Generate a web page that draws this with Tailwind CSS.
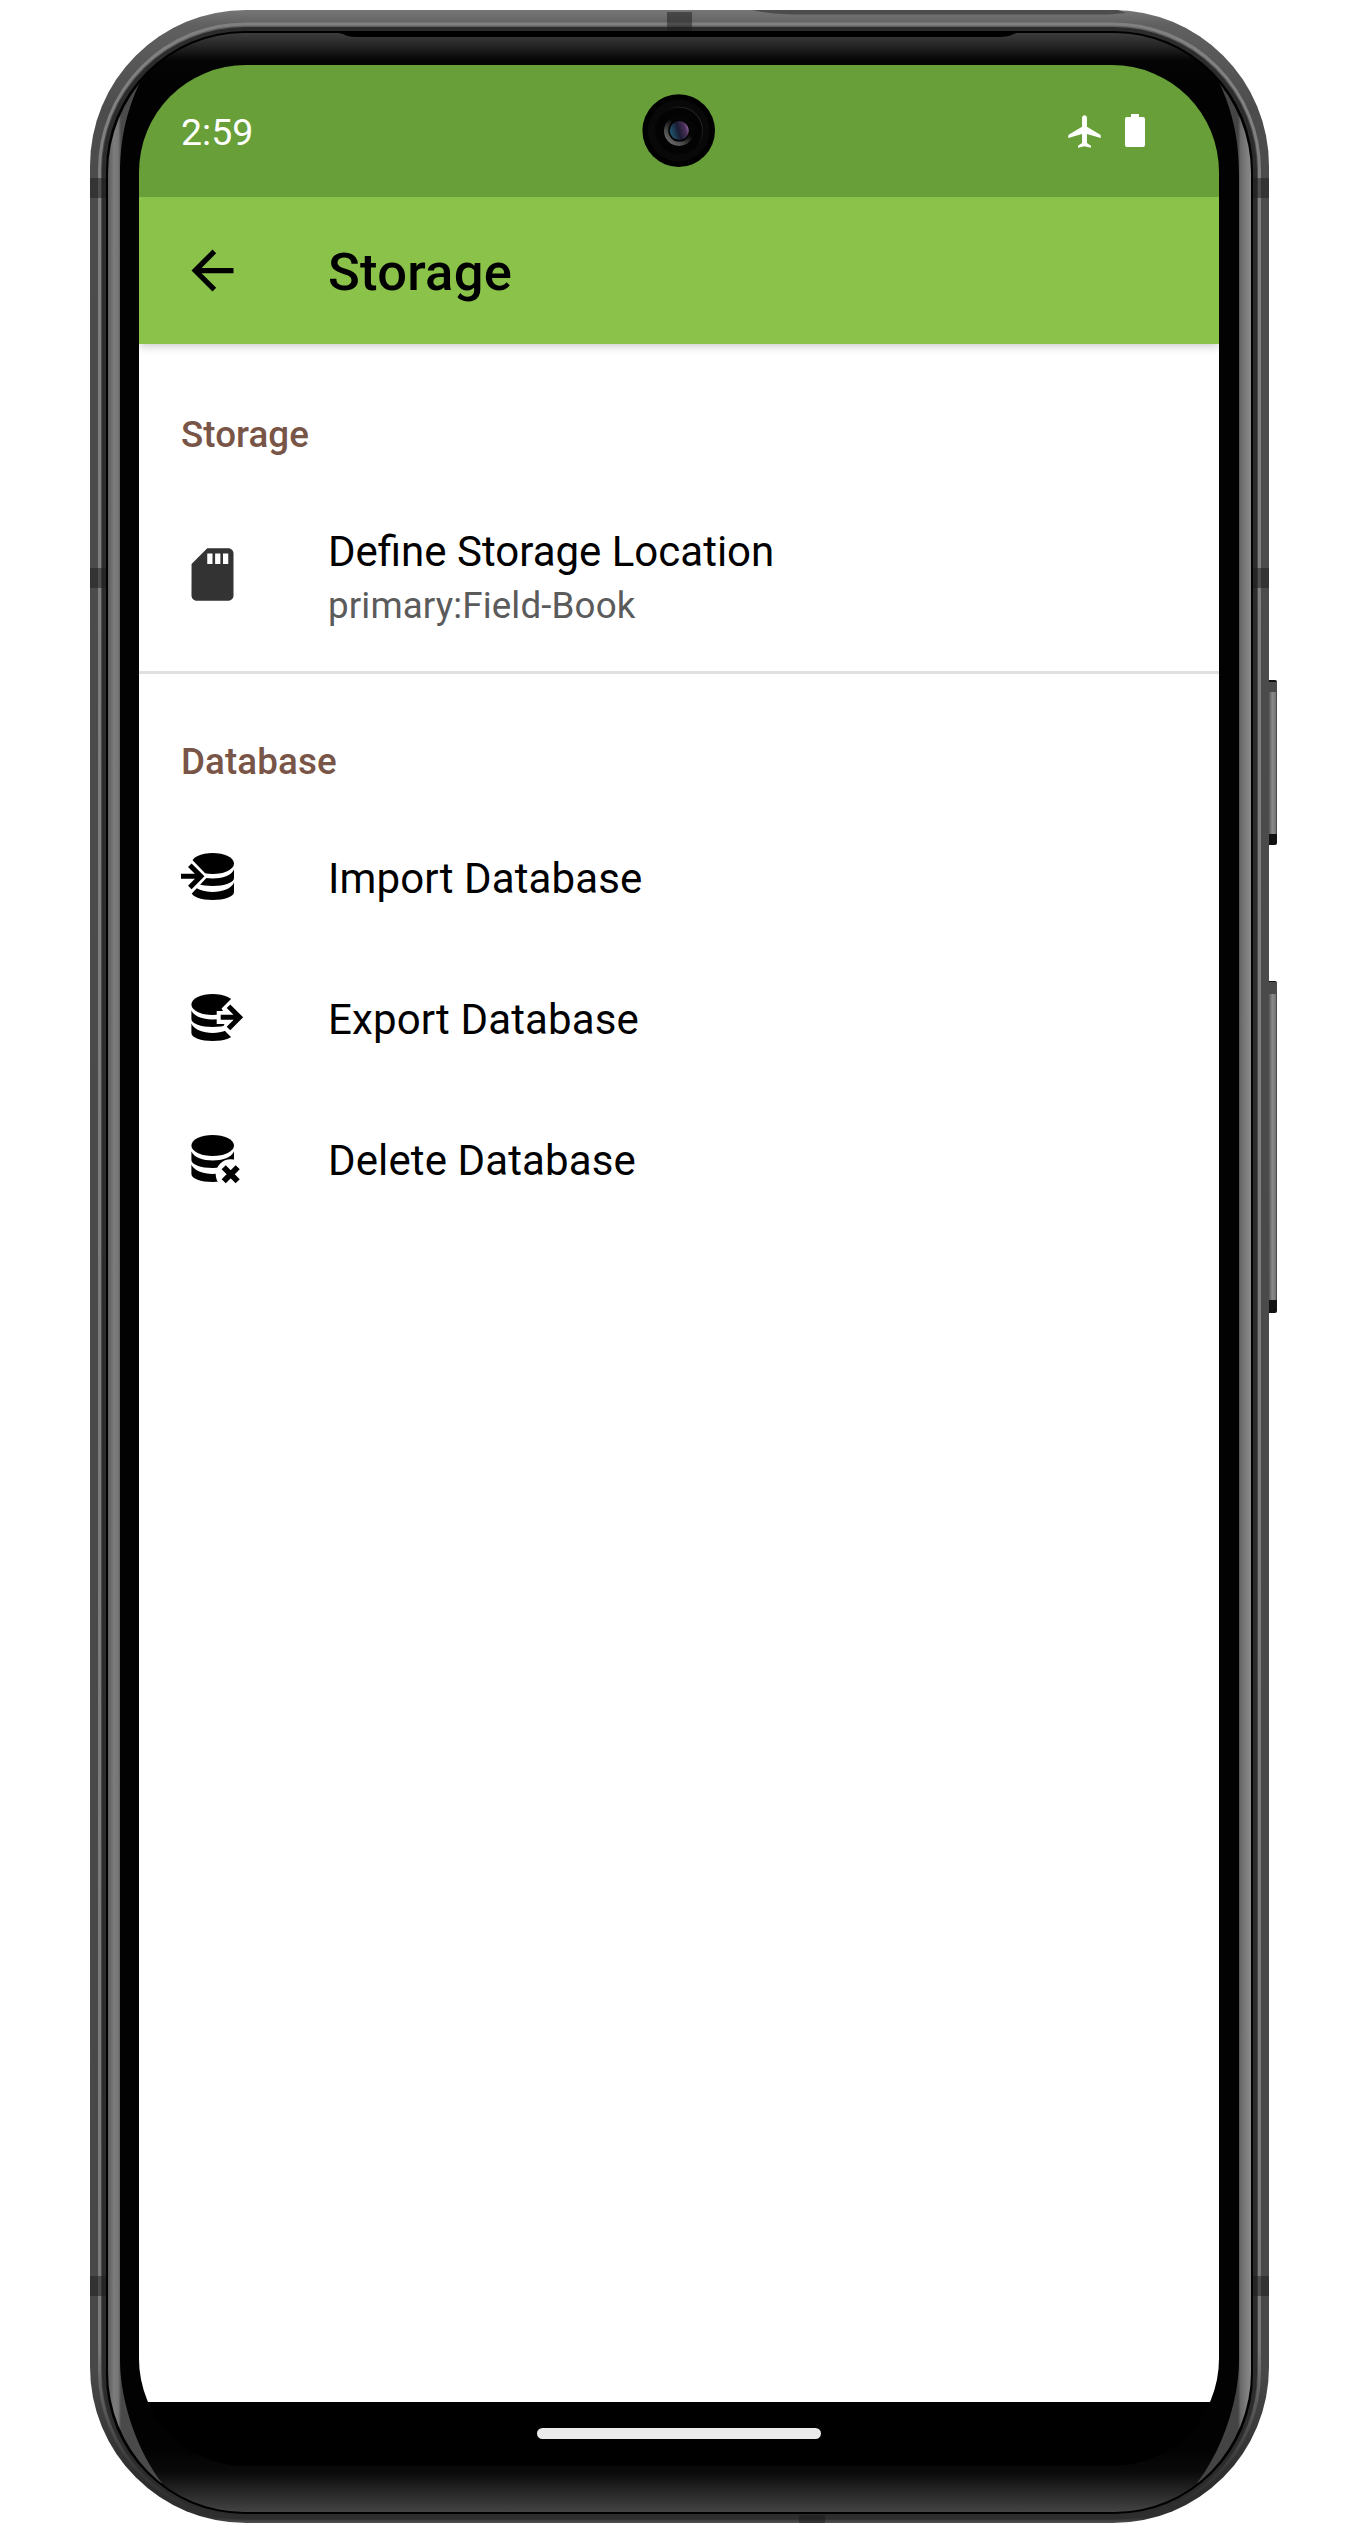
<!DOCTYPE html>
<html lang="en">
<head>
<meta charset="utf-8">
<title>Storage</title>
<script src="https://cdn.jsdelivr.net/npm/@tailwindcss/browser@4"></script>
</head>
<body class="relative h-[2533px] w-[1367px] overflow-hidden bg-white font-['Roboto',sans-serif] text-black">

<!-- Device body -->
<svg class="absolute inset-0" width="1367" height="2533" viewBox="0 0 1367 2533" fill="none">
  <defs>
    <linearGradient id="body" gradientUnits="userSpaceOnUse" x1="0" y1="10" x2="0" y2="2523">
      <stop offset="0" stop-color="#767676"/><stop offset=".006" stop-color="#606060"/><stop offset=".04" stop-color="#4c4c4c"/><stop offset=".94" stop-color="#484848"/><stop offset=".985" stop-color="#2c2c2c"/><stop offset=".998" stop-color="#303030"/><stop offset="1" stop-color="#505050"/>
    </linearGradient>
    <linearGradient id="line" gradientUnits="userSpaceOnUse" x1="0" y1="10" x2="0" y2="2523">
      <stop offset="0" stop-color="#808080"/><stop offset=".93" stop-color="#7a7a7a"/><stop offset=".98" stop-color="#353535"/><stop offset="1" stop-color="#2c2c2c"/>
    </linearGradient>
    <linearGradient id="glass" gradientUnits="userSpaceOnUse" x1="0" y1="33" x2="0" y2="2512">
      <stop offset="0" stop-color="#3c3c3c"/><stop offset=".005" stop-color="#262626"/><stop offset=".011" stop-color="#050505"/><stop offset=".02" stop-color="#020202"/><stop offset=".975" stop-color="#020202"/><stop offset=".984" stop-color="#0a0a0a"/><stop offset=".994" stop-color="#2e2e2e"/><stop offset="1" stop-color="#444"/>
    </linearGradient>
    <linearGradient id="bandL" gradientUnits="userSpaceOnUse" x1="108" y1="0" x2="121" y2="0">
      <stop offset="0" stop-color="#5a5a5a"/><stop offset=".45" stop-color="#7c7c7c"/><stop offset=".8" stop-color="#767676"/><stop offset="1" stop-color="#4a4a4a"/>
    </linearGradient>
    <linearGradient id="bandR" gradientUnits="userSpaceOnUse" x1="1251" y1="0" x2="1238" y2="0">
      <stop offset="0" stop-color="#8a8a8a"/><stop offset=".4" stop-color="#7c7c7c"/><stop offset=".8" stop-color="#6a6a6a"/><stop offset="1" stop-color="#444"/>
    </linearGradient>
    <linearGradient id="key" x1="0" y1="0" x2="1" y2="0">
      <stop offset="0" stop-color="#555"/><stop offset=".4" stop-color="#8a8a8a"/><stop offset=".8" stop-color="#7a7a7a"/><stop offset="1" stop-color="#333"/>
    </linearGradient>
    <clipPath id="glassClip"><rect x="108" y="33" width="1143" height="2479" rx="136" ry="140"/></clipPath>
  </defs>

  <!-- Side keys -->
  <rect x="1266" y="680" width="11" height="165" rx="2" fill="#111"/>
  <rect x="1268" y="682" width="9" height="12" fill="#4a4a4a"/>
  <rect x="1269" y="692" width="8" height="142" fill="url(#key)"/>
  <rect x="1266" y="981" width="11" height="332" rx="2" fill="#111"/>
  <rect x="1268" y="982" width="9" height="14" fill="#4a4a4a"/>
  <rect x="1269" y="994" width="8" height="306" fill="url(#key)"/>

  <!-- Metal rail -->
  <rect x="90" y="10" width="1179" height="2513" rx="156" fill="url(#body)"/>
  <path d="M752 10H1118L1126 13L1108 14.500H800C778 14.500 768 13 752 10Z" fill="#4c4c4c"/>
  <rect x="99.500" y="24" width="1160" height="2494" rx="146" stroke="url(#line)" stroke-width="3"/>
  <rect x="102" y="27" width="1155" height="2489" rx="143" fill="#2c2c2c"/>
  <path d="M667 12H692V31H667ZM90 178H106V198H90ZM1253 178H1269V198H1253ZM90 568H106V588H90ZM1253 568H1269V588H1253ZM90 2276H106V2296H90ZM1253 2276H1269V2296H1253ZM799 2515H825V2523H799Z" fill="#1c1c1c" fill-opacity=".5"/>
  <rect x="106" y="31" width="1147" height="2483" rx="139" fill="#000"/>

  <!-- Glass edge -->
  <rect x="108" y="33" width="1143" height="2479" rx="136" ry="140" fill="url(#glass)"/>
  <path d="M338 32H1023C1012 33 1012 37 1000 37H356C346 37 346 34 338 33Z" fill="#000"/>
  <g clip-path="url(#glassClip)">
    <path d="M148 66C130 100 120 130 120 175V2360C120 2405 140 2455 162 2483L100 2500V60Z" fill="url(#bandL)"/>
    <path d="M1211 66C1229 100 1239 130 1239 175V2360C1239 2405 1219 2455 1197 2483L1260 2500V60Z" fill="url(#bandR)"/>
  </g>
</svg>

<!-- Screen -->
<div class="relative ml-[139px] mt-[65px] flex h-[2401px] w-[1080px] flex-col overflow-hidden rounded-[107px] bg-black">
  <header class="relative z-20 flex h-[132px] shrink-0 items-center justify-between bg-[#689f38] pl-[42px] pr-[74px] text-white">
    <span class="pt-[3px] text-[37.5px] leading-[43px]">2:59</span>
    <div class="flex items-center gap-[21px]">
      <svg width="39" height="39" viewBox="0 0 24 24" fill="currentColor"><path d="M22 16v-1.300c0-.4-.2-.7-.5-.9l-8-4.800V3.500c0-.83-.67-1.500-1.500-1.500s-1.500.67-1.500 1.500V9l-8 4.800c-.3.200-.5.500-.5.900V16l8.500-2.500V19L8 20.700V22l4-1 4 1v-1.300L13.500 19v-5.500L22 16z"/></svg>
      <svg class="-mt-px" width="20" height="33" viewBox="0 0 20 33" fill="currentColor"><path d="M6 0h8v3h4a2 2 0 0 1 2 2v26a2 2 0 0 1-2 2H2a2 2 0 0 1-2-2V5a2 2 0 0 1 2-2h4z"/></svg>
    </div>
    <svg class="absolute left-[503px] top-[29px]" width="74" height="74" viewBox="0 0 74 74">
      <defs>
        <linearGradient id="lens" x1="0" y1=".6" x2="1" y2=".3"><stop offset="0" stop-color="#1f5a70"/><stop offset=".45" stop-color="#1a1c33"/><stop offset=".8" stop-color="#4a3058"/><stop offset="1" stop-color="#a070b0"/></linearGradient>
        <linearGradient id="ring" x1="0" y1="1" x2=".8" y2="0"><stop offset="0" stop-color="#808080"/><stop offset=".35" stop-color="#4a4a4a"/><stop offset=".65" stop-color="#050505"/></linearGradient>
        <linearGradient id="rim" x1="0" y1="1" x2="1" y2="0"><stop offset=".5" stop-color="#040404"/><stop offset="1" stop-color="#3a3a3a"/></linearGradient>
      </defs>
      <circle cx="36.700" cy="36.600" r="36.300" fill="#000"/>
      <circle cx="36.700" cy="36.600" r="31" fill="#080808"/>
      <circle cx="37" cy="36.600" r="23.500" fill="#030303" stroke="url(#rim)" stroke-width="1"/>
      <circle cx="37" cy="37" r="15" fill="url(#ring)"/>
      <circle cx="37.300" cy="36.600" r="11" fill="#020202"/>
      <circle cx="37.300" cy="36.600" r="9.500" fill="url(#lens)"/>
    </svg>
  </header>

  <div class="relative z-10 flex h-[147px] shrink-0 items-center bg-[#8bc34a] pl-[42px] shadow-[0_2px_9px_rgba(0,0,0,0.22)]">
    <svg width="63" height="63" viewBox="0 0 24 24"><path d="M20 11H7.830l5.590-5.590L12 4l-8 8 8 8 1.410-1.410L7.830 13H20v-2z"/></svg>
    <h1 class="ml-[84px] pt-[3px] text-[52.5px] font-medium leading-[62px] tracking-[0.25px]">Storage</h1>
  </div>

  <main class="h-[2058px] shrink-0 bg-white">
    <section class="h-[330px] border-b-[3px] border-[#e0e0e0] px-[42px] pt-[69px]">
      <h2 class="text-[36.75px] font-medium leading-[43px] tracking-[0.05px] text-[#795548]">Storage</h2>
      <div class="mt-[71px] flex gap-[84px]">
        <svg class="mt-4 shrink-0" width="63" height="63" viewBox="0 0 24 24" fill="#333"><path d="M18 2h-8L4.020 8 4 20c0 1.100.9 2 2 2h12c1.100 0 2-.9 2-2V4c0-1.100-.9-2-2-2zm-6 6h-2V4h2v4zm3 0h-2V4h2v4zm3 0h-2V4h2v4z"/></svg>
        <div>
          <p class="text-[42px] leading-[49px]">Define Storage Location</p>
          <p class="mt-2 text-[36.75px] leading-[43px] tracking-[0.12px] text-[#5b5b5b]">primary:Field-Book</p>
        </div>
      </div>
    </section>

    <section class="px-[42px] pt-[66px]">
      <h2 class="text-[36.75px] font-medium leading-[43px] tracking-[0.1px] text-[#795548]">Database</h2>
      <ul class="mt-[25px] text-[42px] leading-[49px] tracking-[0.12px]">
        <li class="flex h-[141px] items-center gap-[84px]">
          <svg width="63" height="63" viewBox="0 0 63 63">
            <ellipse cx="31.700" cy="16.500" rx="21.300" ry="10.500"/>
            <path d="M10.400 22.500C13 28.500 22 31.500 31.700 31.500S50.500 28.500 53 22.500V31C53 35.500 43.500 39 31.700 39S10.400 35.500 10.400 31ZM10.400 35.500C13 41.500 22 45 31.700 45S50.500 41.500 53 35.500V45C53 49.500 43.500 53 31.700 53S10.400 49.500 10.400 45Z"/>
            <path fill="#fff" d="M27 29.300L9 10.500H0V48.500H9Z"/>
            <path fill="none" stroke="#000" stroke-width="5" d="M0 29.300H20M8.800 18.200L19.900 29.300L8.800 40.400"/>
          </svg>
          <span>Import Database</span>
        </li>
        <li class="flex h-[141px] items-center gap-[84px]">
          <svg width="63" height="63" viewBox="0 0 63 63">
            <ellipse cx="31.700" cy="16.500" rx="21.300" ry="10.500"/>
            <path d="M10.400 22.500C13 28.500 22 31.500 31.700 31.500S50.500 28.500 53 22.500V31C53 35.500 43.500 39 31.700 39S10.400 35.500 10.400 31ZM10.400 35.500C13 41.500 22 45 31.700 45S50.500 41.500 53 35.500V45C53 49.500 43.500 53 31.700 53S10.400 49.500 10.400 45Z"/>
            <path fill="#fff" d="M35.700 23H42L40.500 20.500L51 10H63V50H51L44.500 43.500L41.500 40L43.500 36H35.700Z"/>
            <path fill="none" stroke="#000" stroke-width="5" d="M39.700 29.300H59M47.500 18.200L58.600 29.300L47.500 40.400"/>
          </svg>
          <span>Export Database</span>
        </li>
        <li class="flex h-[141px] items-center gap-[84px]">
          <svg width="63" height="63" viewBox="0 0 63 63">
            <ellipse cx="31.700" cy="16.500" rx="21.300" ry="10.500"/>
            <path d="M10.400 22.500C13 28.500 22 31.500 31.700 31.500S50.500 28.500 53 22.500V31C53 35.500 43.500 39 31.700 39S10.400 35.500 10.400 31ZM10.400 35.500C13 41.500 22 45 31.700 45S50.500 41.500 53 35.500V45C53 49.500 43.500 53 31.700 53S10.400 49.500 10.400 45Z"/>
            <circle cx="49.700" cy="45.300" r="15" fill="#fff"/>
            <path fill="none" stroke="#000" stroke-width="5.800" d="M42.700 38.300L56.700 52.300M56.700 38.300L42.700 52.300"/>
          </svg>
          <span>Delete Database</span>
        </li>
      </ul>
    </section>
  </main>

  <nav class="flex h-[63px] shrink-0 items-center justify-center">
    <div class="h-[11px] w-[284px] rounded-full bg-[#ebebeb]"></div>
  </nav>
</div>
</body>
</html>
